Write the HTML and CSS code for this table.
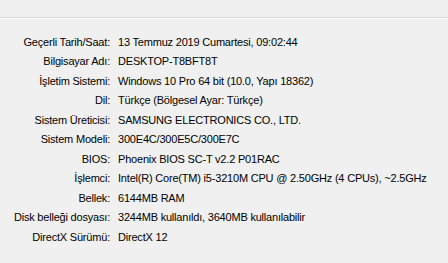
FILE: index.html
```html
<!DOCTYPE html>
<html lang="tr">
<head>
<meta charset="utf-8">
<link rel="stylesheet" href="styles.css">
</head>
<body>
<div class="top"></div>
<div class="info">
  <div class="lbl">Geçerli Tarih/Saat:</div><div class="val">13 Temmuz 2019 Cumartesi, 09:02:44</div>
  <div class="lbl">Bilgisayar Adı:</div><div class="val">DESKTOP-T8BFT8T</div>
  <div class="lbl">İşletim Sistemi:</div><div class="val">Windows 10 Pro 64 bit (10.0, Yapı 18362)</div>
  <div class="lbl">Dil:</div><div class="val">Türkçe (Bölgesel Ayar: Türkçe)</div>
  <div class="lbl">Sistem Üreticisi:</div><div class="val">SAMSUNG ELECTRONICS CO., LTD.</div>
  <div class="lbl">Sistem Modeli:</div><div class="val">300E4C/300E5C/300E7C</div>
  <div class="lbl">BIOS:</div><div class="val">Phoenix BIOS SC-T v2.2 P01RAC</div>
  <div class="lbl">İşlemci:</div><div class="val">Intel(R) Core(TM) i5-3210M CPU @ 2.50GHz (4 CPUs), ~2.5GHz</div>
  <div class="lbl">Bellek:</div><div class="val">6144MB RAM</div>
  <div class="lbl">Disk belleği dosyası:</div><div class="val">3244MB kullanıldı, 3640MB kullanılabilir</div>
  <div class="lbl">DirectX Sürümü:</div><div class="val">DirectX 12</div>
</div>
</body>
</html>
```
FILE: styles.css
```css
html, body {
  margin: 0;
  padding: 0;
  background: #f0f0f0;
}
body {
  width: 448px;
  height: 263px;
  overflow: hidden;
  font-family: "Liberation Sans", Arial, sans-serif;
  font-size: 11px;
  letter-spacing: -0.2px;
  color: #000;
}
.top {
  height: 17px;
  border-bottom: 1px solid #d5d5d5;
  box-shadow: 0 1px 0 #ffffff;
}
.info {
  display: grid;
  grid-template-columns: 110px auto;
  column-gap: 8px;
  grid-auto-rows: 19.5px;
  align-items: center;
  padding-top: 14px;
  white-space: nowrap;
}
.lbl {
  text-align: right;
}
```
